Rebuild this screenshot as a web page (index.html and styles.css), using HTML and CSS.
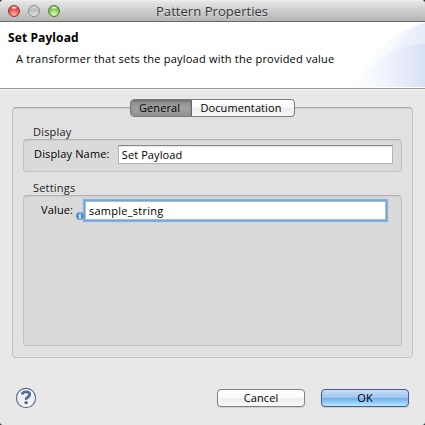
FILE: index.html
```html
<!DOCTYPE html>
<html lang="en">
<head>
<meta charset="utf-8">
<title>Pattern Properties</title>
<link rel="stylesheet" href="styles.css">
</head>
<body>
<div class="window">
  <div class="titlebar">
    <div class="lights"><i class="light red"></i><i class="light gray"></i><i class="light green"></i></div>
    <span class="title">Pattern Properties</span>
  </div>
  <header class="header">
    <svg class="swoosh" width="75" height="66" viewBox="0 0 75 66" aria-hidden="true">
      <defs>
        <linearGradient id="a"><stop offset="0" stop-color="#fff"/><stop offset="1" stop-color="#f2f5fc"/></linearGradient>
        <linearGradient id="b"><stop offset="0" stop-color="#fafbff"/><stop offset="1" stop-color="#e6ecf9"/></linearGradient>
        <linearGradient id="c"><stop offset="0" stop-color="#fff"/><stop offset=".45" stop-color="#f0f4fc"/><stop offset="1" stop-color="#d9e1f5"/></linearGradient>
      </defs>
      <path d="M0 66C14 40 40 8 75 0V66Z" fill="url(#a)"/>
      <path d="M24 66C32 36 49 10 75 1V66Z" fill="url(#b)"/>
      <path d="M3 66C20 42 42 23 75 22V66Z" fill="url(#c)"/>
    </svg>
    <h1>Set Payload</h1>
    <p>A transformer that sets the payload with the provided value</p>
  </header>
  <main class="content">
    <div class="tabs"><div class="tab active"><span>General</span></div><div class="tab"><span>Documentation</span></div></div>
    <section class="panel">
      <h2>Display</h2>
      <div class="group display">
        <label class="name-label">Display Name:</label>
        <div class="field">Set Payload</div>
      </div>
      <h2 class="second">Settings</h2>
      <div class="group settings">
        <label class="value-label">Value:</label>
        <svg class="info" width="8" height="8" viewBox="0 0 8 8"><circle cx="4" cy="4" r="3.9" fill="#5090c4"/><path d="M3.3 1.3h1.5v1.1H3.3zM2.7 3.2h2v2.5h.7v.8H2.6v-.8h.7V4h-.6z" fill="#fff"/></svg>
        <div class="field focused">sample_string</div>
      </div>
    </section>
  </main>
  <footer class="footer">
    <svg class="help" width="22" height="22" viewBox="0 0 22 22"><defs><linearGradient id="h" x2="0" y2="1"><stop offset="0" stop-color="#fff"/><stop offset=".5" stop-color="#ececec"/><stop offset="1" stop-color="#fff"/></linearGradient></defs><circle cx="11" cy="11" r="9.6" fill="url(#h)" stroke="#536b93" stroke-width="1.1"/><path d="M7.200 7.500C7.400 5.500 8.800 4.900 11 4.900c2.400 0 3.800.8 3.800 2.600 0 2.400-3.800 2.500-3.800 5.200" fill="none" stroke="#536b93" stroke-width="2.700"/><rect x="9.500" y="14.300" width="3.200" height="3" rx="1" fill="#536b93"/></svg>
    <div class="button"><span class="cancel">Cancel</span></div>
    <div class="button primary"><span class="ok">OK</span></div>
  </footer>
</div>
</body>
</html>
```
FILE: styles.css
```css
* { box-sizing: border-box; }
html { background: #26323e; }
body { margin: 0; font: 11px/14px "Open Sans", "Noto Sans", sans-serif; color: #000; }
h1, h2, p { margin: 0; }
.window { width: 425px; height: 425px; overflow: hidden; background: #e8e8e8; border-radius: 4px 4px 3px 3px; }
.titlebar { height: 22px; position: relative; background: linear-gradient(#e6e6e6, #d0d0d0 45%, #b4b4b4); border-top: 1px solid #eee; border-bottom: 1px solid #686868; }
.lights { display: flex; gap: 8px; padding: 4px 0 0 8px; }
.light { width: 12px; height: 12px; border-radius: 50%; border: 1px solid #777; }
.red { border-color: #98352f; background: radial-gradient(ellipse 4px 2px at 50% 15%, #fff, transparent), radial-gradient(circle at 50% 85%, #ffb0a5, #e2443e 65%, #b52e2b); }
.gray { border-color: #8c8c8c; background: linear-gradient(#d5d5d5, #bcbcbc 40%, #e2e2e2); }
.green { border-color: #4d7932; background: radial-gradient(ellipse 4px 2px at 50% 15%, #fff, transparent), radial-gradient(circle at 50% 85%, #d9ffab, #7fbd4f 65%, #4f8a2d); }
.title { position: absolute; left: 156px; top: 2px; font-size: 13px; line-height: 16px; letter-spacing: .05px; color: #383838; white-space: nowrap; text-shadow: 0 1px #ddd; }
.header { position: relative; height: 68px; padding: 8px 0 0 8px; background: #fff; border-bottom: 1px solid #f2f2f2; box-shadow: inset 0 -1px #999; }
.swoosh { position: absolute; right: 0; top: 0; }
h1 { font-size: 12px; line-height: 16px; font-weight: 700; letter-spacing: .1px; }
p { padding: 6px 0 0 8px; white-space: nowrap; letter-spacing: .22px; }
.content { height: 268px; padding: 9px 12px 0; }
.tabs { display: flex; justify-content: center; width: 165px; height: 18px; margin-left: 118px; position: relative; z-index: 1; border: 1px solid #7c7c7c; border-radius: 4px; overflow: hidden; background: linear-gradient(#fff, #f8f8f8 48%, #ececec 52%, #f8f8f8); }
.tab { flex: 1; text-align: center; line-height: 16px; padding-right: 4px; letter-spacing: .1px; }
.tab.active { flex: 0 0 61px; padding-right: 3px; background: linear-gradient(#888, #a0a0a0 50%, #929292); border-right: 1px solid #666; box-shadow: inset 0 1px 2px #666; }
.panel { height: 251px; margin-top: -10px; padding: 17px 10px 0; background: #e1e1e1; border: 1px solid #c3c3c3; border-top-color: #a9a9a9; border-radius: 4px; box-shadow: inset 0 1px #cfcfcf; }
h2 { font-size: 11px; line-height: 14px; font-weight: 400; padding-left: 10px; color: #222; letter-spacing: .2px; }
.group { display: flex; width: 379px; background: #dadada; border: 1px solid #c2c2c2; border-top-color: #b2b2b2; border-radius: 4px; box-shadow: inset 0 1px 1px #ccc; }
.display { height: 33px; padding: 5px 8px 0 10px; }
.settings { height: 151px; padding: 4px 15px 0 17px; }
.second { margin-top: 9px; }
.name-label { width: 84px; padding-top: 2px; white-space: nowrap; letter-spacing: .15px; }
.value-label { width: 35px; padding-top: 3px; white-space: nowrap; letter-spacing: .15px; }
.field { width: 276px; height: 19px; padding-left: 3px; line-height: 18px; letter-spacing: .1px; background: #fff; border: 1px solid #b4b4b4; border-top-color: #8c8c8c; box-shadow: inset 0 1px #e4e4e4; }
.info { flex: none; margin-top: 12px; position: relative; z-index: 1; }
.focused { width: 301px; height: 19px; margin: 1px 0 0 1px; letter-spacing: .25px; line-height: 18px; border: 1px solid #a4bed9; box-shadow: 0 0 0 1px #72a6d7, 0 0 1px 2px #8ab2dc; }
.footer { display: flex; height: 67px; padding: 31px 16px 0 15px; }
.help { flex: none; margin-top: -2px; margin-right: 180px; }
.button { flex: none; width: 88px; height: 18px; margin-right: 16px; border: 1px solid #818181; border-radius: 4px; text-align: center; line-height: 16px; letter-spacing: .1px; background: linear-gradient(#fff, #fbfbfb 48%, #ededed 52%, #fafafa); box-shadow: 0 1px 1px #ccc; }
.swoosh { clip-path: inset(0 0 1px 0); }
.primary { margin-right: 0; border-color: #4b5597; background: linear-gradient(#c9def5, #9cc5ee 48%, #72afeb 52%, #b5eaff); }
```
